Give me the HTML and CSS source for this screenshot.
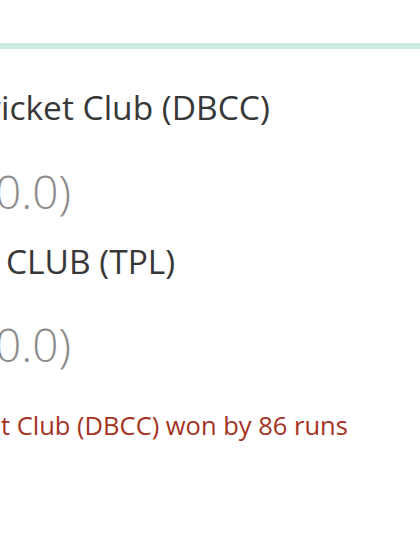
FILE: index.html
```html
<!DOCTYPE html>
<html lang="en">
<head>
<meta charset="utf-8">
<title>Match summary</title>
<link rel="stylesheet" href="styles.css">
</head>
<body>
  <div class="tab-bar"></div>
  <section class="summary">
    <div class="team team-first"><span class="lead"><span>Dhaka Bangla Cr</span></span>icket Club (DBCC)</div>
    <div class="score score-first"><span class="lead lead-score"><span>172/6 (2</span></span>0.0)</div>
    <div class="team team-second"><span class="lead lead-gap"><span>TIGERS PREMIER LEAGUE</span></span>CLUB (TPL)</div>
    <div class="score score-second"><span class="lead lead-score"><span>86/10 (2</span></span>0.0)</div>
    <div class="result"><span class="lead"><span>Dhaka Bangla Cricke</span></span>t Club (DBCC) won by 86 runs</div>
  </section>
</body>
</html>
```

FILE: styles.css
```css
html, body {
  margin: 0;
  padding: 0;
  background: #ffffff;
  overflow: hidden;
}

body {
  width: 420px;
  height: 560px;
  font-family: "Open Sans", "Noto Sans", sans-serif;
}

.tab-bar {
  height: 6px;
  margin-top: 43px;
  background: #c9ebe2;
}

.summary {
  padding-left: 1px;
  display: flex;
  flex-direction: column;
}

/* zero-width box: the leading part of each line runs off to the left */
.lead {
  display: inline-flex;
  width: 0;
  justify-content: flex-end;
  white-space: nowrap;
}

.lead-score {
  margin-left: -6px;
}

.lead-gap {
  margin-right: 5px;
}

.team {
  white-space: nowrap;
  font-size: 33.5px;
  line-height: 40px;
  color: #383838;
}

.team-first {
  margin-top: 38px;
}

.team-second {
  margin-top: 20px;
}

.score {
  white-space: nowrap;
  font-size: 46px;
  font-weight: 300;
  line-height: 60px;
  color: #8c8c8c;
}

.score-first {
  margin-top: 34px;
}

.score-second {
  margin-top: 33px;
}

.result {
  white-space: nowrap;
  font-size: 25.5px;
  line-height: 32px;
  color: #a4331f;
  margin-top: 35px;
}
```
